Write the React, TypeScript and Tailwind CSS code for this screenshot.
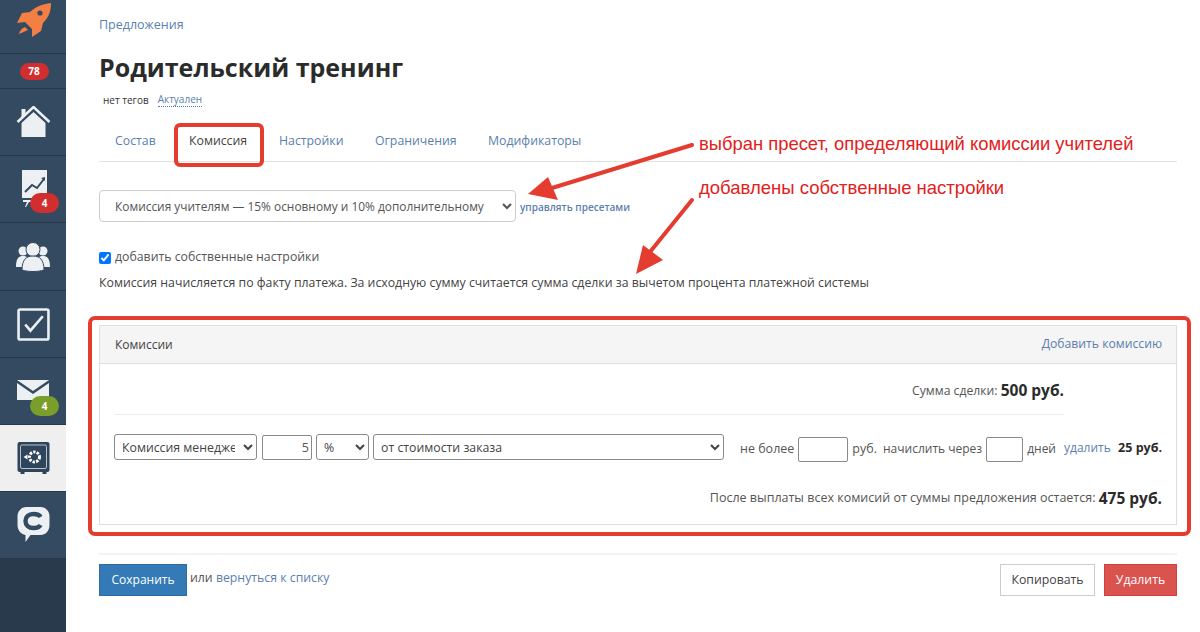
import React from 'react';

const font = { fontFamily: '"Open Sans", "Noto Sans", sans-serif' };

const Badge = ({ color, top, children }: { color: string; top: string; children: React.ReactNode }) => (
  <span className={`absolute left-[30px] flex h-[20px] w-[29px] items-center justify-center rounded-[10px] text-[10px] font-bold text-white ${top} ${color}`}>
    {children}
  </span>
);

const NavItem = ({ h, active, children }: { h: string; active?: boolean; children: React.ReactNode }) => (
  <div className={`relative flex items-center justify-center border-b border-[#26384a] ${h} ${active ? 'bg-[#efefef]' : ''}`}>
    {children}
  </div>
);

const Sidebar = () => (
  <aside className="flex h-[632px] w-[66px] shrink-0 flex-col bg-[#2a3a4d]">
    <div className="flex flex-col bg-[#334a60]">
      <NavItem h="h-[54px]">
        <svg className="mb-[13px] ml-[2px]" width="34" height="34" viewBox="0 0 34 34">
          <path d="M34 0 C25 1 18 4 13 9 L5 10 L0 20 L8 19 L15 26 L15 34 L24 28 L26 20 C32 14 34 8 34 0Z" fill="#f47f45" />
          <circle cx="23" cy="10" r="2.6" fill="#334a60" />
          <path d="M8 24 L11 27 L2 31 Q3 26 8 24Z" fill="#f47f45" />
        </svg>
      </NavItem>
      <NavItem h="h-[35px]">
        <span className="ml-[2px] flex h-[17px] w-[29px] items-center justify-center rounded-[9px] bg-[#d12f2f] text-[10px] font-bold text-white">78</span>
      </NavItem>
      <NavItem h="h-[67px]">
        <svg width="35" height="32" viewBox="0 0 34 32">
          <path d="M1 16 L17 1 L33 16" fill="none" stroke="#edf0f2" strokeWidth="2.5" />
          <path d="M5 17 L17 6 L29 17 V31 H5Z M5 3 H9 V8 L5 12Z" fill="#edf0f2" />
        </svg>
      </NavItem>
      <NavItem h="h-[67px]">
        <svg className="ml-[3px]" width="26" height="38" viewBox="0 0 26 38">
          <path d="M0 0 H25 V28 H0Z" fill="#edf0f2" />
          <path d="M3 22 L10 15 L15 18 L22 9" fill="none" stroke="#334a60" strokeWidth="2" />
          <path d="M19 8 L23 7 L23 11Z" fill="#334a60" />
          <path d="M1 30 H11 V32 H7 L4 37 H3 L5 32 H1Z" fill="#edf0f2" />
        </svg>
        <Badge color="bg-[#d12f2f]" top="top-[37px]">4</Badge>
      </NavItem>
      <NavItem h="h-[68px]">
        <svg width="34" height="30" viewBox="0 0 34 30">
          <circle cx="7" cy="9" r="4.5" fill="#edf0f2" />
          <circle cx="27" cy="9" r="4.5" fill="#edf0f2" />
          <path d="M0 25 C0 16 3 14 7 14 C11 14 14 16 14 25Z M20 25 C20 16 23 14 27 14 C31 14 34 16 34 25Z" fill="#edf0f2" />
          <circle cx="17" cy="7.5" r="7" fill="#edf0f2" stroke="#334a60" strokeWidth="1" />
          <path d="M6 28 C6 18 10 14 17 14 C24 14 28 18 28 28 C22 30 12 30 6 28Z" fill="#edf0f2" stroke="#334a60" strokeWidth="1" />
        </svg>
      </NavItem>
      <NavItem h="h-[67px]">
        <svg width="33" height="33" viewBox="0 0 32 32">
          <rect x="1.5" y="1.5" width="29" height="29" rx="1.5" fill="none" stroke="#edf0f2" strokeWidth="2.5" />
          <path d="M8 16 L13 22 L25 8" fill="none" stroke="#edf0f2" strokeWidth="2.6" />
        </svg>
      </NavItem>
      <NavItem h="h-[67px]">
        <svg className="mb-[3px]" width="34" height="20" viewBox="0 0 32 20">
          <path d="M0 0 H32 L16 11Z" fill="#edf0f2" />
          <path d="M0 3 L16 14 L32 3 V20 H0Z" fill="#edf0f2" />
        </svg>
        <Badge color="bg-[#7a9e2a]" top="top-[38px]">4</Badge>
      </NavItem>
      <NavItem h="h-[67px]" active>
        <svg width="33" height="32" viewBox="0 0 32 32">
          <rect x="0" y="0" width="32" height="30" rx="2" fill="#2f455c" />
          <path d="M3 32 H7 V30 H3Z M25 32 H29 V30 H25Z" fill="#2f455c" />
          <rect x="3" y="3" width="26" height="23.5" rx="1.5" fill="none" stroke="#b9c3cc" strokeWidth="1" />
          <circle cx="17" cy="15" r="5" fill="none" stroke="#fff" strokeWidth="3" strokeDasharray="2.4 1.2" />
          <path d="M6 15 L10 12.5 V17.5Z" fill="#fff" />
        </svg>
      </NavItem>
      <NavItem h="h-[67px]">
        <svg width="33" height="36" viewBox="0 0 32 36">
          <path d="M9 0 H23 C28 0 32 4 32 9 V18 C32 24 28 28 23 28 H13 L8 35 L8 28 C3 27 0 23 0 18 V9 C0 4 4 0 9 0Z" fill="#edf0f2" />
          <path d="M23 10 C22 8 19 7 16 7 C11 7 8 10 8 14 C8 18 11 21 16 21 C19 21 22 20 23 18" fill="none" stroke="#334a60" strokeWidth="4.4" />
        </svg>
      </NavItem>
    </div>
  </aside>
);

const selectCls = 'h-[26px] rounded-[3px] border border-[#8a8a8a] bg-white text-[12.3px] text-[#444]';
const inputCls = 'h-[25px] rounded-[2px] border border-[#8a8a8a] bg-white';

const Overlay = () => (
  <div className="pointer-events-none absolute inset-0">
    <div className="absolute left-[174px] top-[123px] h-[44px] w-[90px] rounded-[6px] border-[4px] border-[#e53c30]" />
    <div className="absolute left-[88px] top-[316px] h-[220px] w-[1103px] rounded-[7px] border-[4px] border-[#e53c30]" />
    <span className="absolute left-[699px] top-[132px] text-[18.4px] leading-[24px] text-[#e3201b]" style={{ fontFamily: '"Liberation Sans", sans-serif' }}>
      выбран пресет, определяющий комиссии учителей
    </span>
    <span className="absolute left-[699px] top-[176px] text-[18.5px] leading-[24px] text-[#e3201b]" style={{ fontFamily: '"Liberation Sans", sans-serif' }}>
      добавлены собственные настройки
    </span>
    <svg className="absolute inset-0" width="1200" height="632" viewBox="0 0 1200 632">
      <path d="M692 145 L552 188" stroke="#e53c30" strokeWidth="4" strokeLinecap="round" />
      <path d="M528 194 L548 177 L558 200Z" fill="#e53c30" />
      <path d="M692 200 L650 252" stroke="#e53c30" strokeWidth="4" strokeLinecap="round" />
      <path d="M636 274 L643 245 L663 260Z" fill="#e53c30" />
    </svg>
  </div>
);

const App: React.FC = () => {
  return (
    <div className="relative flex h-[632px] w-[1200px] overflow-hidden bg-white text-[#333]" style={font}>
      <Sidebar />
      <main className="flex w-[1134px] flex-col pl-[33px] pr-[23px]">
        <a className="mt-[16px] text-[12.5px] leading-[17px] text-[#5b7fae]">Предложения</a>
        <h1 className="mt-[16px] text-[25px] font-bold leading-[36px] text-[#2b2b2b]">Родительский тренинг</h1>
        <div className="mt-[7px] flex h-[16px] items-center pl-[4px] text-[10px] text-[#333]">
          нет тегов
          <span className="ml-[9px] border-b border-dotted border-[#4a80b8] leading-[13px] text-[#5b7fae]">Актуален</span>
        </div>
        <nav className="mt-[8px] flex h-[46px] items-start border-b border-[#e3e3e3] pl-[16px] pt-[16px] text-[12.3px] leading-[18px] text-[#5b7fae]">
          <span className="w-[74px]">Состав</span>
          <span className="w-[90px] text-[#444]">Комиссия</span>
          <span className="w-[96px]">Настройки</span>
          <span className="w-[113px]">Ограничения</span>
          <span>Модификаторы</span>
        </nav>
        <div className="mt-[28px] flex items-center">
          <select className="h-[32px] w-[417px] rounded-[4px] border border-[#ccc] bg-white pl-[11px] pr-[2px] text-[11.9px] text-[#555]">
            <option>Комиссия учителям — 15% основному и 10% дополнительному</option>
          </select>
          <a className="ml-[4px] mt-[2px] text-[10px] font-semibold text-[#5b7fae]">управлять пресетами</a>
        </div>
        <label className="mt-[27px] flex h-[17px] items-center text-[12.3px] text-[#555]">
          <input type="checkbox" defaultChecked className="mr-[4px] size-[12px]" />
          добавить собственные настройки
        </label>
        <p className="mt-[8px] text-[12.3px] leading-[18px] text-[#444]">
          Комиссия начисляется по факту платежа. За исходную сумму считается сумма сделки за вычетом процента платежной системы
        </p>
        <section className="mt-[33px] h-[200px] border border-[#dedede]">
          <header className="flex h-[38px] items-center justify-between border-b border-[#dedede] bg-[#f5f5f5] px-[14px] text-[12.2px]">
            <span className="ml-[1px] text-[12px] text-[#444]">Комиссии</span>
            <a className="text-[#5b7fae]">Добавить комиссию</a>
          </header>
          <div className="px-[14px]">
            <div className="flex h-[51px] w-[950px] items-end justify-end border-b border-[#eee] pb-[14px] text-[12.2px] text-[#555]">
              Сумма сделки:&nbsp;<b className="text-[15.5px] leading-[20px] text-[#2b2b2b]">500 руб.</b>
            </div>
            <div className="mt-[19px] flex items-center text-[12.5px] text-[#555]">
              <select className={`${selectCls} w-[143px] pl-[3px] pr-[5px]`}>
                <option>Комиссия менеджера</option>
              </select>
              <input className={`${inputCls} ml-[5px] w-[50px] pr-[2px] text-right text-[12.5px]`} defaultValue="5" />
              <select className={`${selectCls} ml-[4px] w-[53px] pl-[3px]`}>
                <option>%</option>
              </select>
              <select className={`${selectCls} ml-[4px] w-[351px] pl-[3px]`}>
                <option>от стоимости заказа</option>
              </select>
              <span className="ml-[16px] translate-y-[2px]">не более</span>
              <input className={`${inputCls} ml-[4px] w-[50px] translate-y-[2px]`} />
              <span className="ml-[4px] translate-y-[2px]">руб.</span>
              <span className="ml-[6px] translate-y-[2px] text-[12px]">начислить через</span>
              <input className={`${inputCls} ml-[4px] w-[37px] translate-y-[2px]`} />
              <span className="ml-[4px] translate-y-[2px] text-[12px]">дней</span>
              <a className="ml-[8px] translate-y-[1px] text-[12px] text-[#5b7fae]">удалить</a>
              <b className="ml-auto translate-y-[1px] text-[12.5px] text-[#2b2b2b]">25 руб.</b>
            </div>
            <div className="mt-[28px] flex items-center justify-end text-[12.5px] text-[#555]">
              После выплаты всех комисий от суммы предложения остается:&nbsp;<b className="text-[15.5px] leading-[20px] text-[#2b2b2b]">475 руб.</b>
            </div>
          </div>
        </section>
        <div className="mt-[28px] flex items-start border-t-2 border-[#f3f3f3] pt-[9px] text-[12.3px]">
          <button className="h-[32px] w-[88px] border border-[#2e6da4] bg-[#337ab7] text-[12px] text-white">Сохранить</button>
          <span className="ml-[3px] mt-[5px] text-[#555]">или <a className="text-[#5b7fae]">вернуться к списку</a></span>
          <button className="ml-auto h-[32px] w-[95px] border border-[#ccc] bg-white text-[#444]">Копировать</button>
          <button className="ml-[9px] h-[32px] w-[73px] border border-[#d43f3a] bg-[#d9534f] text-white">Удалить</button>
        </div>
      </main>
      <Overlay />
    </div>
  );
};

export default App;
